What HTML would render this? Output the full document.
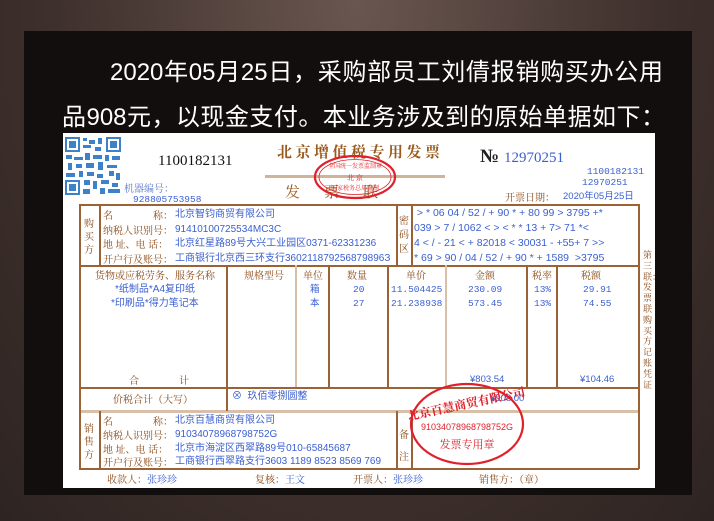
<!DOCTYPE html>
<html><head><meta charset="utf-8"><style>
*{margin:0;padding:0;box-sizing:border-box}
body{width:714px;height:521px;overflow:hidden;position:relative;background:radial-gradient(ellipse at 50% 0%,#6a5650,#3e302c 60%,#2e2422);font-family:"Liberation Sans","Noto Sans CJK SC",sans-serif}
.panel{position:absolute;left:24px;top:31px;width:668px;height:464px;background:#120e0d}
.l{position:absolute;color:#fff;font-size:24px;white-space:nowrap;text-align:justify;text-align-last:justify;line-height:30px}
.inv{position:absolute;left:63px;top:133px;width:592px;height:355px;background:#fff;overflow:hidden}
.a{position:absolute;white-space:nowrap;line-height:1}
.b{color:#8b4a18;font-family:"Noto Serif CJK SC",serif;font-size:10px}
.u{color:#3a5fd0;font-size:9.5px;font-family:"Liberation Mono","Noto Sans CJK SC",monospace}
.h{position:absolute;background:#9a6235;height:1.5px}
.v{position:absolute;background:#9a6235;width:1.5px}
</style></head><body>
<div class="panel"></div>
<div class="l" style="left:110px;top:58px;width:553px">2020年05月25日，采购部员工刘倩报销购买办公用</div>
<div class="l" style="left:62px;top:103px;width:603px">品908元，以现金支付。本业务涉及到的原始单据如下：</div>
<div class="inv">
<svg style="position:absolute;left:2px;top:4px" width="56" height="58" viewBox="0 0 56 58">
<rect width="56" height="58" fill="#fff"/>
<g fill="#3d82c8">
<rect x="0" y="0" width="15" height="15"/><rect x="41" y="0" width="15" height="15"/><rect x="0" y="43" width="15" height="15"/>
</g>
<g fill="#fff"><rect x="2" y="2" width="11" height="11"/><rect x="43" y="2" width="11" height="11"/><rect x="2" y="45" width="11" height="11"/></g>
<g fill="#3d82c8"><rect x="4" y="4" width="7" height="7"/><rect x="45" y="4" width="7" height="7"/><rect x="4" y="47" width="7" height="7"/>
<rect x="18" y="1" width="4" height="3"/><rect x="24" y="3" width="6" height="4"/><rect x="33" y="1" width="4" height="6"/><rect x="18" y="8" width="8" height="3"/><rect x="30" y="10" width="6" height="4"/>
<rect x="1" y="18" width="6" height="4"/><rect x="9" y="20" width="9" height="3"/><rect x="20" y="16" width="5" height="7"/><rect x="28" y="18" width="9" height="4"/><rect x="40" y="18" width="4" height="6"/><rect x="47" y="19" width="8" height="4"/>
<rect x="3" y="26" width="4" height="7"/><rect x="11" y="27" width="6" height="4"/><rect x="21" y="26" width="8" height="5"/><rect x="33" y="25" width="5" height="8"/><rect x="42" y="28" width="10" height="3"/>
<rect x="1" y="36" width="9" height="4"/><rect x="14" y="34" width="4" height="6"/><rect x="22" y="35" width="7" height="4"/><rect x="32" y="37" width="6" height="4"/><rect x="44" y="34" width="5" height="5"/><rect x="51" y="36" width="4" height="7"/>
<rect x="19" y="43" width="6" height="5"/><rect x="28" y="44" width="4" height="8"/><rect x="36" y="43" width="8" height="4"/><rect x="47" y="46" width="6" height="4"/><rect x="18" y="52" width="7" height="5"/><rect x="35" y="51" width="5" height="6"/><rect x="43" y="52" width="12" height="4"/></g>
</svg>
<div class="a" style="left:95px;top:21px;font-size:15px;font-family:'Liberation Serif',serif;color:#111">1100182131</div>
<div class="a b" style="left:61px;top:50px;color:#5a78c8">机器编号：</div>
<div class="a u" style="left:70px;top:62px">928805753958</div>
<div class="a" style="left:214px;top:11px;font-size:15px;font-weight:bold;color:#9a5a1c;font-family:'Noto Serif CJK SC',serif;letter-spacing:3.5px">北京增值税专用发票</div>
<div style="position:absolute;left:202px;top:42px;width:180px;height:3px;background:#d0b498"></div>
<div class="a" style="left:222px;top:51px;font-size:15px;color:#9a5a1c;font-family:'Noto Serif CJK SC',serif;letter-spacing:24px">发票联</div>
<svg style="position:absolute;left:250px;top:22px" width="84" height="48"><ellipse cx="42" cy="22" rx="40" ry="21" fill="none" stroke="#e0202a" stroke-width="2.2"/><ellipse cx="42" cy="22" rx="36" ry="17.5" fill="none" stroke="#e0202a" stroke-width="0.8"/>
<text x="42" y="13" font-size="6" fill="#e0202a" text-anchor="middle" font-family="Noto Serif CJK SC">全国统一发票监制章</text><text x="42" y="25" font-size="7" fill="#e0202a" text-anchor="middle" font-family="Noto Serif CJK SC">北  京</text><text x="42" y="35" font-size="6" fill="#e0202a" text-anchor="middle" font-family="Noto Serif CJK SC">国家税务总局监制</text></svg>
<div class="a" style="left:417px;top:14px;font-size:19px;font-weight:bold;color:#222;font-family:'Liberation Serif',serif">№</div>
<div class="a" style="left:441px;top:18px;font-size:15px;color:#3a5fd0;font-family:'Liberation Serif',serif">12970251</div>
<div class="a u" style="left:524px;top:34px">1100182131</div>
<div class="a u" style="left:519px;top:45px">12970251</div>
<div class="a b" style="left:442px;top:59px">开票日期：</div>
<div class="a u" style="left:500px;top:59px;font-family:'Liberation Sans','Noto Sans CJK SC',sans-serif">2020年05月25日</div>

<div class="h" style="left:16px;top:71px;width:560px"></div>
<div class="h" style="left:16px;top:132px;width:560px"></div>
<div class="h" style="left:16px;top:254px;width:560px"></div>
<div style="position:absolute;left:16px;top:277px;width:560px;height:2.5px;background:#d8c0a8"></div>
<div class="h" style="left:16px;top:335px;width:560px"></div>
<div class="v" style="left:16px;top:71px;height:265px"></div>
<div class="v" style="left:575px;top:71px;height:265px"></div>
<div class="v" style="left:36px;top:71px;height:61px"></div>
<div class="v" style="left:333px;top:71px;height:61px"></div>
<div class="v" style="left:348px;top:71px;height:61px"></div>
<div class="v" style="left:36px;top:278px;height:58px"></div>
<div class="v" style="left:333px;top:278px;height:58px"></div>
<div class="v" style="left:348px;top:278px;height:58px"></div>
<div class="v" style="left:163px;top:132px;height:146px"></div>
<div style="position:absolute;left:232px;top:132px;width:2px;height:122px;background:#d8c0a8"></div>
<div class="v" style="left:265px;top:132px;height:122px"></div>
<div class="v" style="left:324px;top:132px;height:122px"></div>
<div style="position:absolute;left:382px;top:132px;width:2px;height:122px;background:#d8c0a8"></div>
<div class="v" style="left:463px;top:132px;height:122px"></div>
<div class="v" style="left:493px;top:132px;height:122px"></div>

<div class="a b" style="left:21px;top:83px;width:10px;line-height:13px;white-space:normal">购买方</div>
<div class="a b" style="left:40px;top:75px;line-height:14.5px">名　　　　称：<br>纳税人识别号：<br>地 址、电 话：<br>开户行及账号：</div>
<div class="a u" style="left:112px;top:75px;line-height:14.5px;font-size:10px;font-family:'Liberation Sans','Noto Sans CJK SC',sans-serif">北京智钧商贸有限公司<br>91410100725534MC3C<br>北京红星路89号大兴工业园区0371-62331236<br>工商银行北京西三环支行360211879256879896З</div>
<div class="a b" style="left:336px;top:80px;width:10px;line-height:14px;white-space:normal">密码区</div>
<div class="a" style="left:351px;top:73px;font-size:10.5px;color:#3a5fd0;line-height:15px">&nbsp;&gt; * 06 04 / 52 / + 90 * + 80 99 &gt; 3795 +*<br>039 &gt; 7 / 1062 &lt; &gt; &lt; * * 13 + 7&gt; 71 *&lt;<br>4 &lt; / - 21 &lt; + 82018 &lt; 30031 - +55+ 7 &gt;&gt;<br>* 69 &gt; 90 / 04 / 52 / + 90 * + 1589 &nbsp;&gt;3795</div>

<div class="a b" style="left:32px;top:137px">货物或应税劳务、服务名称</div>
<div class="a b" style="left:181px;top:137px">规格型号</div>
<div class="a b" style="left:240px;top:137px">单位</div>
<div class="a b" style="left:284px;top:137px">数量</div>
<div class="a b" style="left:343px;top:137px">单价</div>
<div class="a b" style="left:412px;top:137px">金额</div>
<div class="a b" style="left:469px;top:137px">税率</div>
<div class="a b" style="left:518px;top:137px">税额</div>
<div class="a u" style="left:52px;top:152px;font-size:10px;font-family:'Liberation Sans','Noto Sans CJK SC',sans-serif">*纸制品*A4复印纸</div>
<div class="a u" style="left:48px;top:166px;font-size:10px;font-family:'Liberation Sans','Noto Sans CJK SC',sans-serif">*印刷品*得力笔记本</div>
<div class="a u" style="left:247px;top:152px">箱</div><div class="a u" style="left:247px;top:166px">本</div>
<div class="a u" style="left:290px;top:152px">20</div><div class="a u" style="left:290px;top:166px">27</div>
<div class="a u" style="left:328px;top:152px">11.504425</div><div class="a u" style="left:328px;top:166px">21.238938</div>
<div class="a u" style="left:405px;top:152px">230.09</div><div class="a u" style="left:405px;top:166px">573.45</div>
<div class="a u" style="left:471px;top:152px">13%</div><div class="a u" style="left:471px;top:166px">13%</div>
<div class="a u" style="left:520px;top:152px">29.91</div><div class="a u" style="left:520px;top:166px">74.55</div>
<div class="a b" style="left:66px;top:242px">合　　　　计</div>
<div class="a u" style="left:407px;top:242px;font-family:'Liberation Sans',sans-serif">¥803.54</div>
<div class="a u" style="left:517px;top:242px;font-family:'Liberation Sans',sans-serif">¥104.46</div>
<div class="a b" style="left:50px;top:261px">价税合计（大写）</div>
<div class="a u" style="left:169px;top:259px;font-size:10px;font-family:'Liberation Sans','Noto Sans CJK SC',sans-serif">⊗&nbsp; 玖佰零捌圆整</div>
<div class="a u" style="left:427px;top:261px;font-family:'Liberation Sans',sans-serif">¥908.00</div>

<div class="a b" style="left:21px;top:288px;width:10px;line-height:13px;white-space:normal">销售方</div>
<div class="a b" style="left:40px;top:281px;line-height:13.8px">名　　　　称：<br>纳税人识别号：<br>地 址、电 话：<br>开户行及账号：</div>
<div class="a u" style="left:112px;top:281px;line-height:13.8px;font-size:10px;font-family:'Liberation Sans','Noto Sans CJK SC',sans-serif">北京百慧商贸有限公司<br>91034078968798752G<br>北京市海淀区西翠路89号010-65845687<br>工商银行西翠路支行3603 1189 8523 8569 769</div>
<div class="a b" style="left:336px;top:290px;width:10px;line-height:22px;white-space:normal">备注</div>
<svg style="position:absolute;left:346px;top:249px" width="116" height="84"><ellipse cx="58" cy="42" rx="56" ry="40" fill="none" stroke="#e0202a" stroke-width="2.2"/>
<text x="58" y="26" font-size="12" fill="#e0202a" text-anchor="middle" font-weight="bold" font-family="Noto Serif CJK SC" transform="rotate(-12 58 26)">北京百慧商贸有限公司</text>
<text x="58" y="48" font-size="9" fill="#e0202a" text-anchor="middle" font-family="Liberation Sans">91034078968798752G</text>
<text x="58" y="66" font-size="11" fill="#e0202a" text-anchor="middle" font-family="Noto Serif CJK SC">发票专用章</text></svg>

<div class="a b" style="left:44px;top:341px">收款人：<span style="color:#3a5fd0">张珍珍</span></div>
<div class="a b" style="left:192px;top:341px">复核：<span style="color:#3a5fd0">王文</span></div>
<div class="a b" style="left:290px;top:341px">开票人：<span style="color:#3a5fd0">张珍珍</span></div>
<div class="a b" style="left:416px;top:341px">销售方：（章）</div>
<div class="a b" style="left:580px;top:117px;width:10px;line-height:10.8px;white-space:normal;font-size:9px">第三联：发票联　购买方记账凭证</div>
</div>
</body></html>
